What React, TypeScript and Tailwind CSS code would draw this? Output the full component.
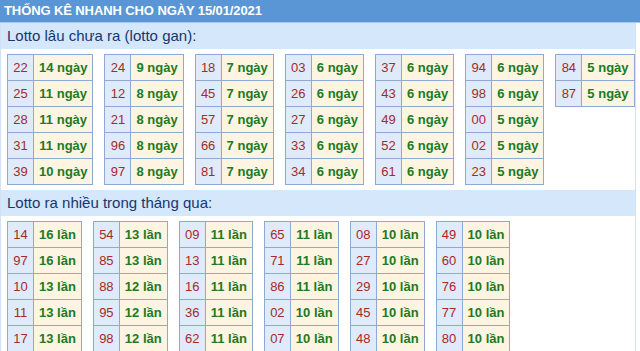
import React from 'react';

type Row = [string, string];

const gan: Row[][] = [
  [['22', '14 ngày'], ['25', '11 ngày'], ['28', '11 ngày'], ['31', '11 ngày'], ['39', '10 ngày']],
  [['24', '9 ngày'], ['12', '8 ngày'], ['21', '8 ngày'], ['96', '8 ngày'], ['97', '8 ngày']],
  [['18', '7 ngày'], ['45', '7 ngày'], ['57', '7 ngày'], ['66', '7 ngày'], ['81', '7 ngày']],
  [['03', '6 ngày'], ['26', '6 ngày'], ['27', '6 ngày'], ['33', '6 ngày'], ['34', '6 ngày']],
  [['37', '6 ngày'], ['43', '6 ngày'], ['49', '6 ngày'], ['52', '6 ngày'], ['61', '6 ngày']],
  [['94', '6 ngày'], ['98', '6 ngày'], ['00', '5 ngày'], ['02', '5 ngày'], ['23', '5 ngày']],
  [['84', '5 ngày'], ['87', '5 ngày']],
];

const nhieu: Row[][] = [
  [['14', '16 lần'], ['97', '16 lần'], ['10', '13 lần'], ['11', '13 lần'], ['17', '13 lần']],
  [['54', '13 lần'], ['85', '13 lần'], ['88', '12 lần'], ['95', '12 lần'], ['98', '12 lần']],
  [['09', '11 lần'], ['13', '11 lần'], ['16', '11 lần'], ['36', '11 lần'], ['62', '11 lần']],
  [['65', '11 lần'], ['71', '11 lần'], ['86', '11 lần'], ['02', '10 lần'], ['07', '10 lần']],
  [['08', '10 lần'], ['27', '10 lần'], ['29', '10 lần'], ['45', '10 lần'], ['48', '10 lần']],
  [['49', '10 lần'], ['60', '10 lần'], ['76', '10 lần'], ['77', '10 lần'], ['80', '10 lần']],
];

function LotoTable({ rows }: { rows: Row[] }) {
  return (
    <table className="border-collapse border border-[#8eaad4] self-start">
      <tbody>
        {rows.map(([so, val], i) => (
          <tr key={i} className="h-[26px]">
            <td className="w-[26px] border border-[#8eaad4] bg-[#dfeafa] text-center text-[13px] text-[#a52a2a] p-0">
              {so}
            </td>
            <td className="border border-[#8eaad4] bg-[#fdf4e2] px-[5px] text-center text-[13px] font-bold text-[#217a1f]">
              {val}
            </td>
          </tr>
        ))}
      </tbody>
    </table>
  );
}

function SectionTitle({ children }: { children: React.ReactNode }) {
  return (
    <div className="h-[26px] bg-[#d5e7fa] pl-[6px] flex items-center text-[15px] text-[#173670]">
      {children}
    </div>
  );
}

export default function App() {
  return (
    <div className="w-[640px] h-[351px] overflow-hidden bg-white font-['Liberation_Sans',Arial,sans-serif]">
      {/* tiêu đề */}
      <div className="h-[23px] bg-[#5a95d5] border-b border-[#a8c7ea] pl-[4px] flex items-center text-[13px] font-bold text-white tracking-[-0.1px]">
        THỐNG KÊ NHANH CHO NGÀY 15/01/2021
      </div>

      <div className="w-[636px] border-x border-[#d3e2f2]">
        <SectionTitle>Lotto lâu chưa ra (lotto gan):</SectionTitle>
        <div className="flex gap-x-[11px] pl-[6px] pt-[5px] pb-[5px] h-[141px]">
          {gan.map((t, i) => (
            <LotoTable key={i} rows={t} />
          ))}
        </div>

        <SectionTitle>Lotto ra nhiều trong tháng qua:</SectionTitle>
        <div className="flex gap-x-[11px] pl-[6px] pt-[5px]">
          {nhieu.map((t, i) => (
            <LotoTable key={i} rows={t} />
          ))}
        </div>
      </div>
    </div>
  );
}
